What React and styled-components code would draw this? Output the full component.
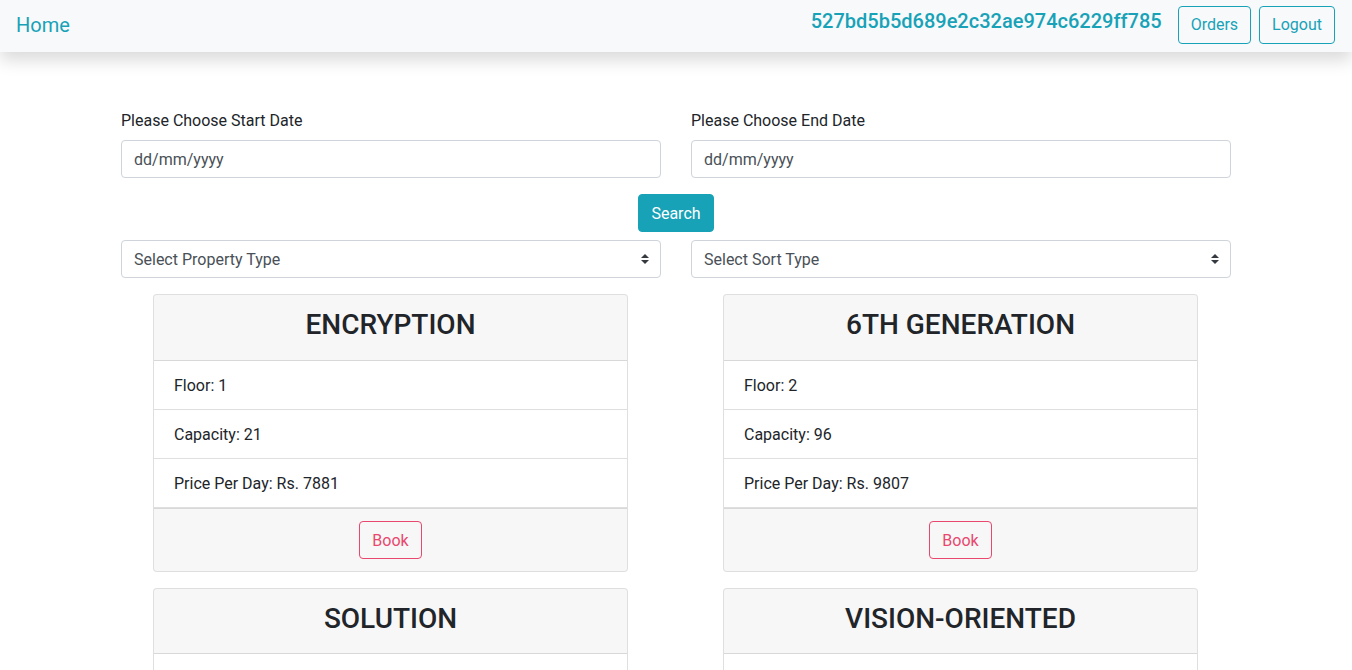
import React from 'react';
import styled, { createGlobalStyle } from 'styled-components';

const GlobalStyle = createGlobalStyle`
  * { box-sizing: border-box; }
  body {
    margin: 0;
    font-family: Roboto, "Liberation Sans", Arial, sans-serif;
    font-size: 16px;
    line-height: 1.5;
    color: #212529;
    background: #fff;
  }
`;

const Navbar = styled.nav`
  display: flex;
  justify-content: space-between;
  align-items: center;
  padding: 6px 17px 8px 16px;
  background: #f8f9fa;
  box-shadow: 0 8px 16px rgba(0, 0, 0, 0.15);
`;
const Brand = styled.a`
  font-size: 20px;
  line-height: 30px;
  color: #17a2b8;
  text-decoration: none;
`;
const NavRight = styled.div`
  display: flex;
  align-items: center;
`;
const UserHash = styled.h5`
  margin: 0 16px 8px 0;
  font-size: 20px;
  font-weight: 500;
  line-height: 1.2;
  color: #17a2b8;
`;
const Button = styled.button`
  font-family: inherit;
  font-size: 16px;
  line-height: 1.5;
  padding: ${(p) => (p.$low ? '7px 12px 5px' : '6px 12px')};
  border-radius: 4px;
  border: 1px solid ${(p) => p.$color};
  color: ${(p) => (p.$solid ? '#fff' : p.$color)};
  background: ${(p) => (p.$solid ? p.$color : 'transparent')};
  cursor: pointer;
  & + & { margin-left: 8px; }
`;

const Container = styled.main`
  max-width: 1140px;
  margin: 0 auto;
  padding: 57px 15px 0;
`;
const TwoCols = styled.div`
  display: grid;
  grid-template-columns: 1fr 1fr;
  column-gap: 30px;
  row-gap: ${(p) => p.$rowGap || 0}px;
`;
const Field = styled.div`
  display: flex;
  flex-direction: column;
`;
const Label = styled.label`
  margin-bottom: 7px;
`;
const TextInput = styled.input`
  height: 38px;
  padding: 6px 12px;
  font-family: inherit;
  font-size: 16px;
  color: #495057;
  border: 1px solid #ced4da;
  border-radius: 4px;
  &::placeholder { color: #495057; opacity: 1; }
`;
const SearchRow = styled.div`
  display: flex;
  justify-content: center;
  margin: 16px 0 8px;
`;
const SelectWrap = styled.div`
  position: relative;
`;
const Select = styled.select`
  width: 100%;
  height: 38px;
  padding: 6px 28px 6px 12px;
  font-family: inherit;
  font-size: 16px;
  color: #495057;
  background: #fff;
  border: 1px solid #ced4da;
  border-radius: 4px;
  appearance: none;
`;
const Caret = styled.svg`
  position: absolute;
  right: 12px;
  top: 14px;
  pointer-events: none;
`;

const Cards = styled(TwoCols)`
  margin-top: 16px;
  justify-items: start;
`;
const Card = styled.div`
  width: 475px;
  margin-left: 32px;
  border: 1px solid rgba(0, 0, 0, 0.125);
  border-radius: 4px;
  overflow: hidden;
  background: #fff;
`;
const CardHeader = styled.div`
  padding: 13px 20px 12px;
  background: rgba(0, 0, 0, 0.03);
  border-bottom: 1px solid rgba(0, 0, 0, 0.125);
  text-align: center;
`;
const CardTitle = styled.h3`
  margin: 0 0 6px;
  font-size: 28px;
  font-weight: 500;
  line-height: 1.2;
`;
const List = styled.ul`
  list-style: none;
  margin: 0;
  padding: 0;
`;
const Item = styled.li`
  padding: 13px 20px 11px;
  border-bottom: 1px solid rgba(0, 0, 0, 0.125);
`;
const CardFooter = styled.div`
  display: flex;
  justify-content: center;
  padding: 12px 20px;
  background: rgba(0, 0, 0, 0.03);
  border-top: 1px solid rgba(0, 0, 0, 0.125);
`;

const rooms = [
  { name: 'ENCRYPTION', floor: 1, capacity: 21, price: 7881 },
  { name: '6TH GENERATION', floor: 2, capacity: 96, price: 9807 },
  { name: 'SOLUTION', floor: 3, capacity: 45, price: 5120 },
  { name: 'VISION-ORIENTED', floor: 1, capacity: 60, price: 6342 },
];

function SortCaret() {
  return (
    <Caret width="8" height="10" viewBox="0 0 4 5">
      <path d="M2 0L0 2h4zm0 5L0 3h4z" fill="#343a40" />
    </Caret>
  );
}

export default function App() {
  return (
    <>
      <GlobalStyle />
      <Navbar>
        <Brand href="#">Home</Brand>
        <NavRight>
          <UserHash>527bd5b5d689e2c32ae974c6229ff785</UserHash>
          <Button $color="#17a2b8">Orders</Button>
          <Button $color="#17a2b8">Logout</Button>
        </NavRight>
      </Navbar>

      <Container>
        <TwoCols>
          <Field>
            <Label>Please Choose Start Date</Label>
            <TextInput type="text" placeholder="dd/mm/yyyy" />
          </Field>
          <Field>
            <Label>Please Choose End Date</Label>
            <TextInput type="text" placeholder="dd/mm/yyyy" />
          </Field>
        </TwoCols>

        <SearchRow>
          <Button $color="#17a2b8" $solid $low>Search</Button>
        </SearchRow>

        <TwoCols>
          <SelectWrap>
            <Select defaultValue="">
              <option value="">Select Property Type</option>
              <option value="hall">Hall</option>
              <option value="room">Room</option>
            </Select>
            <SortCaret />
          </SelectWrap>
          <SelectWrap>
            <Select defaultValue="">
              <option value="">Select Sort Type</option>
              <option value="asc">Price: Low to High</option>
              <option value="desc">Price: High to Low</option>
            </Select>
            <SortCaret />
          </SelectWrap>
        </TwoCols>

        <Cards $rowGap={16}>
          {rooms.map((r) => (
            <Card key={r.name}>
              <CardHeader>
                <CardTitle>{r.name}</CardTitle>
              </CardHeader>
              <List>
                <Item>Floor: {r.floor}</Item>
                <Item>Capacity: {r.capacity}</Item>
                <Item>Price Per Day: Rs. {r.price}</Item>
              </List>
              <CardFooter>
                <Button $color="#e8476e" $low>Book</Button>
              </CardFooter>
            </Card>
          ))}
        </Cards>
      </Container>
    </>
  );
}
